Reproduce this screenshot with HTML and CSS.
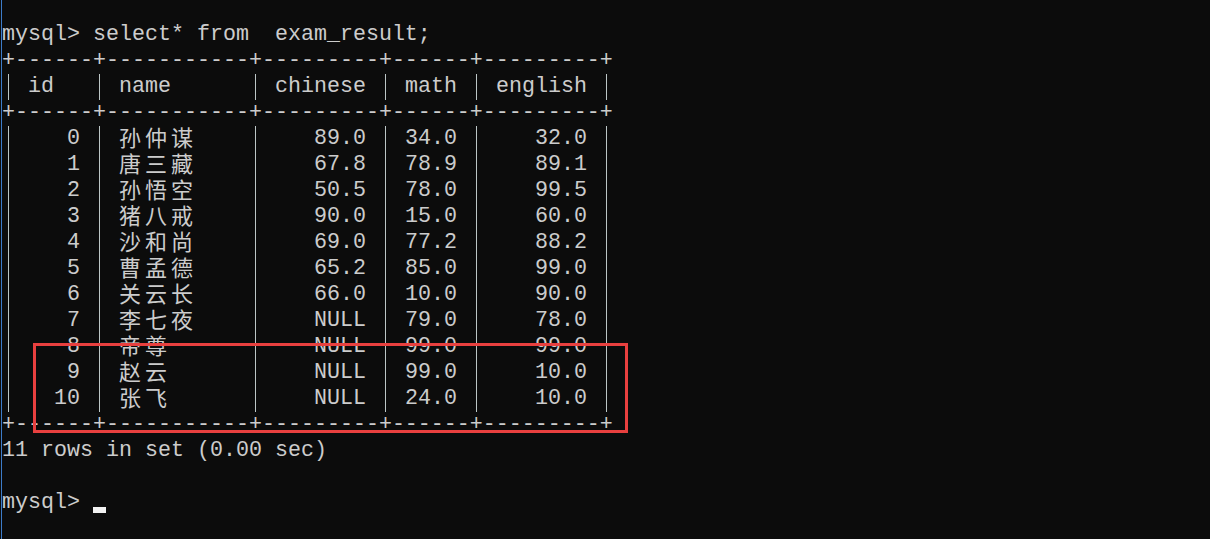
FILE: index.html
```html
<!DOCTYPE html>
<html lang="zh-CN">
<head>
    <meta charset="UTF-8">
    <meta name="viewport" content="width=device-width, initial-scale=1.0">
    <title>mysql</title>
    <link rel="stylesheet" href="styles.css">
</head>
<body>
    <div class="console">
        <div class="line">mysql&gt; select* from  exam_result;</div>
        <div class="line">+------+-----------+---------+------+---------+</div>
        <div class="line"><span class="v"></span> id   <span class="v"></span> name      <span class="v"></span> chinese <span class="v"></span> math <span class="v"></span> english <span class="v"></span></div>
        <div class="line">+------+-----------+---------+------+---------+</div>
        <div class="line"><span class="v"></span>    0 <span class="v"></span> <span class="cjk">孙仲谋</span>    <span class="v"></span>    89.0 <span class="v"></span> 34.0 <span class="v"></span>    32.0 <span class="v"></span></div>
        <div class="line"><span class="v"></span>    1 <span class="v"></span> <span class="cjk">唐三藏</span>    <span class="v"></span>    67.8 <span class="v"></span> 78.9 <span class="v"></span>    89.1 <span class="v"></span></div>
        <div class="line"><span class="v"></span>    2 <span class="v"></span> <span class="cjk">孙悟空</span>    <span class="v"></span>    50.5 <span class="v"></span> 78.0 <span class="v"></span>    99.5 <span class="v"></span></div>
        <div class="line"><span class="v"></span>    3 <span class="v"></span> <span class="cjk">猪八戒</span>    <span class="v"></span>    90.0 <span class="v"></span> 15.0 <span class="v"></span>    60.0 <span class="v"></span></div>
        <div class="line"><span class="v"></span>    4 <span class="v"></span> <span class="cjk">沙和尚</span>    <span class="v"></span>    69.0 <span class="v"></span> 77.2 <span class="v"></span>    88.2 <span class="v"></span></div>
        <div class="line"><span class="v"></span>    5 <span class="v"></span> <span class="cjk">曹孟德</span>    <span class="v"></span>    65.2 <span class="v"></span> 85.0 <span class="v"></span>    99.0 <span class="v"></span></div>
        <div class="line"><span class="v"></span>    6 <span class="v"></span> <span class="cjk">关云长</span>    <span class="v"></span>    66.0 <span class="v"></span> 10.0 <span class="v"></span>    90.0 <span class="v"></span></div>
        <div class="line"><span class="v"></span>    7 <span class="v"></span> <span class="cjk">李七夜</span>    <span class="v"></span>    NULL <span class="v"></span> 79.0 <span class="v"></span>    78.0 <span class="v"></span></div>
        <div class="line"><span class="v"></span>    8 <span class="v"></span> <span class="cjk">帝尊</span>    <span class="v"></span>    NULL <span class="v"></span> 99.0 <span class="v"></span>    99.0 <span class="v"></span></div>
        <div class="line"><span class="v"></span>    9 <span class="v"></span> <span class="cjk">赵云</span>    <span class="v"></span>    NULL <span class="v"></span> 99.0 <span class="v"></span>    10.0 <span class="v"></span></div>
        <div class="line"><span class="v"></span>   10 <span class="v"></span> <span class="cjk">张飞</span>    <span class="v"></span>    NULL <span class="v"></span> 24.0 <span class="v"></span>    10.0 <span class="v"></span></div>
        <div class="line">+------+-----------+---------+------+---------+</div>
        <div class="line">11 rows in set (0.00 sec)</div>
        <div class="line"> </div>
        <div class="line">mysql&gt; <span class="cursor"></span></div>

        <!-- highlight drawn over the last three rows -->
        <div class="mark"></div>
    </div>
</body>
</html>
```

FILE: styles.css
```css
:root {
    --bg-color: #0c0c0c;
    --text-color: #cccccc;
    --bar-color: #bcc6c6;
    --mark-color: #e8403f;
    --edge-color: #3d7cc9;
}
html, body {
    margin: 0;
    padding: 0;
    background-color: var(--bg-color);
    height: 100%;
    overflow: hidden;
}
.console {
    position: relative;
    margin-left: 1px;
    border-left: 1px solid var(--edge-color);
    min-height: 100%;
    box-sizing: border-box;
    padding-top: 22px;
    font-family: 'Liberation Mono', 'DejaVu Sans Mono', monospace;
    font-size: 21.667px;
    line-height: 26px;
    color: var(--text-color);
}
.line {
    height: 26px;
    white-space: pre;
}
.v {
    display: inline-block;
    width: 13px;
    height: 26px;
    vertical-align: top;
    background: linear-gradient(var(--bar-color), var(--bar-color)) 6px 0 / 1px 100% no-repeat;
}
.cjk {
    display: inline-block;
    width: 78px;
    height: 22px;
    vertical-align: top;
    line-height: 21px;
    font-family: 'Noto Sans CJK SC', sans-serif;
    font-size: 22px;
    letter-spacing: 4px;
    white-space: nowrap;
}
.cursor {
    display: inline-block;
    width: 13px;
    height: 6px;
    vertical-align: -5px;
    background-color: #f2f2f2;
}
.mark {
    position: absolute;
    left: 31px;
    top: 343px;
    width: 595px;
    height: 90px;
    box-sizing: border-box;
    border: 3px solid var(--mark-color);
}
```
